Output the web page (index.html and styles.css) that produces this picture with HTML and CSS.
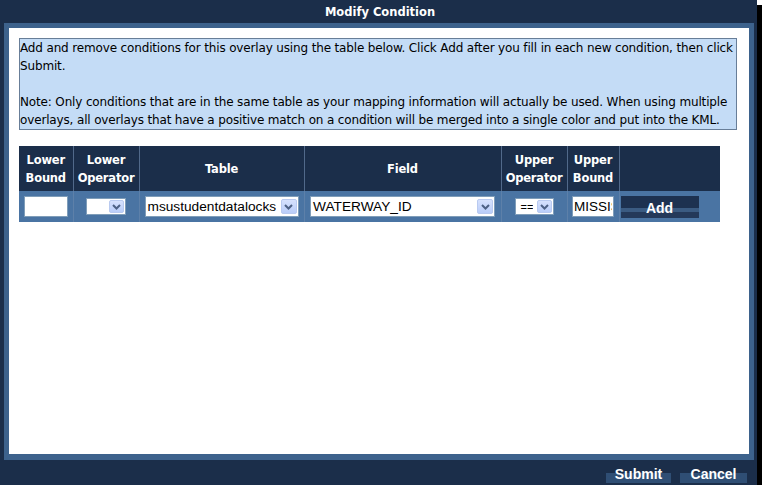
FILE: index.html
```html
<!DOCTYPE html>
<html>
<head>
<meta charset="utf-8">
<title>Modify Condition</title>
<link rel="stylesheet" href="styles.css">
</head>
<body>
<div class="window">
  <div class="titlebar">Modify Condition</div>
  <div class="frame">
    <div class="content">
      <div class="info">Add and remove conditions for this overlay using the table below. Click Add after you fill in each new condition, then click<br>Submit.<br><br>Note: Only conditions that are in the same table as your mapping information will actually be used. When using multiple<br>overlays, all overlays that have a positive match on a condition will be merged into a single color and put into the KML.</div>
      <table class="conditions">
        <colgroup>
          <col class="c1"><col class="c2"><col class="c3"><col class="c4"><col class="c5"><col class="c6"><col class="c7">
        </colgroup>
        <thead>
          <tr>
            <th>Lower<br>Bound</th>
            <th>Lower<br>Operator</th>
            <th>Table</th>
            <th>Field</th>
            <th>Upper<br>Operator</th>
            <th>Upper<br>Bound</th>
            <th></th>
          </tr>
        </thead>
        <tbody>
          <tr>
            <td><input class="textbox lower" type="text" value=""></td>
            <td><span class="select small op-lower"><span class="sel-text"></span><span class="arrow"><svg width="9" height="6" viewBox="0 0 9 6"><path d="M1 1 L4.5 4.5 L8 1" fill="none" stroke="#4d6185" stroke-width="2"/></svg></span></span></td>
            <td><span class="select big tablesel"><span class="sel-text">msustudentdatalocks</span><span class="arrow"><svg width="9" height="6" viewBox="0 0 9 6"><path d="M1 1 L4.5 4.5 L8 1" fill="none" stroke="#4d6185" stroke-width="2"/></svg></span></span></td>
            <td><span class="select big fieldsel"><span class="sel-text">WATERWAY_ID</span><span class="arrow"><svg width="9" height="6" viewBox="0 0 9 6"><path d="M1 1 L4.5 4.5 L8 1" fill="none" stroke="#4d6185" stroke-width="2"/></svg></span></span></td>
            <td><span class="select small op-upper"><span class="sel-text">==</span><span class="arrow"><svg width="9" height="6" viewBox="0 0 9 6"><path d="M1 1 L4.5 4.5 L8 1" fill="none" stroke="#4d6185" stroke-width="2"/></svg></span></span></td>
            <td><input class="textbox upper" type="text" value="MISSISSIPPI" readonly></td>
            <td class="addcell"><span class="btn add">Add</span></td>
          </tr>
        </tbody>
      </table>
    </div>
  </div>
  <div class="footer">
    <span class="btn foot">Submit</span>
    <span class="btn foot cancel">Cancel</span>
  </div>
</div>
</body>
</html>
```
FILE: styles.css
```css
* { box-sizing: border-box; }
html, body { margin: 0; padding: 0; background: #fff; }
body { font-family: "DejaVu Sans", Verdana, sans-serif; }

.window {
  width: 757px;
  height: 485px;
  background: #1b2e4a;
  box-shadow: 5px 5px 0 #000;
  display: flex;
  flex-direction: column;
}

.titlebar {
  height: 23px;
  color: #fff;
  font-weight: bold;
  font-size: 11.5px;
  display: flex;
  align-items: center;
  justify-content: center;
  padding-left: 3px;
}

.frame {
  margin: 0 3px 0 4px;
  background: #3d628c;
  padding: 5px 5px 6px 5px;
  height: 437px;
}

.content {
  background: #fff;
  height: 426px;
  padding: 10px 10px;
}

.info {
  width: 718px;
  border: 1px solid #687e98;
  background: #c4dcf6;
  font-size: 12px;
  letter-spacing: -0.15px;
  line-height: 18px;
  color: #000;
  white-space: nowrap;
  overflow: hidden;
}

.conditions {
  margin-top: 16px;
  border-collapse: collapse;
  table-layout: fixed;
  width: 701px;
}
.c1 { width: 54px; }
.c2 { width: 66px; }
.c3 { width: 165px; }
.c4 { width: 197px; }
.c5 { width: 66px; }
.c6 { width: 52px; }
.c7 { width: 101px; }

.conditions th {
  background: #1b2e4a;
  color: #fff;
  font-weight: bold;
  font-size: 11.5px;
  letter-spacing: -0.2px;
  line-height: 18px;
  height: 45px;
  padding: 0;
  border-left: 1px solid #51698a;
  text-align: center;
  vertical-align: middle;
}
.conditions th:first-child { border-left: none; }

.conditions td {
  background: #4a74a3;
  height: 31px;
  padding: 0;
  text-align: center;
  vertical-align: middle;
  border-left: 1px solid #5d80a9;
  font-size: 0;
}
.conditions td:first-child { border-left: none; }
.conditions td.addcell { text-align: left; padding-left: 1px; }

.textbox {
  display: inline-block;
  vertical-align: middle;
  height: 21px;
  margin: 0;
  padding: 0 1px;
  background: #fff;
  border: 1px solid #7f9db9;
  border-radius: 0;
  outline: none;
  font-family: "Liberation Sans", Arial, sans-serif;
  font-size: 13.5px;
  color: #000;
}
.textbox.lower { width: 44px; }
.textbox.upper { width: 42px; }

.select {
  display: inline-flex;
  vertical-align: middle;
  align-items: center;
  justify-content: space-between;
  background: #fff;
  border: 1px solid #7f9db9;
  font-family: "Liberation Sans", Arial, sans-serif;
  color: #000;
  text-align: left;
  overflow: hidden;
}
.select.big { height: 21px; font-size: 13.7px; }
.select.small { height: 17px; font-size: 11px; }
.op-lower { width: 40px; }
.op-upper { width: 39px; }
.tablesel { width: 154px; }
.fieldsel { width: 185px; }

.sel-text {
  padding-left: 2px;
  white-space: nowrap;
  overflow: hidden;
}
.small .sel-text { padding-left: 5px; }

.arrow {
  flex: none;
  width: 16px;
  height: 15px;
  margin-right: 1px;
  border: 1px solid #b9caf0;
  border-radius: 2px;
  background: linear-gradient(#d6e1fd, #b9cdf9);
  display: flex;
  align-items: center;
  justify-content: center;
}
.small .arrow { height: 13px; width: 15px; }

.btn {
  display: inline-flex;
  align-items: center;
  justify-content: center;
  font-family: "Liberation Sans", Arial, sans-serif;
  font-weight: bold;
  font-size: 14px;
  color: #fff;
}
.btn.add {
  width: 78px;
  height: 22px;
  background: linear-gradient(#1d3150 0, #1d3150 55%, #3b5b82 55%, #3b5b82 72%, #24395a 72%);
  padding-top: 2px;
}

.footer {
  height: 25px;
  display: flex;
  justify-content: flex-end;
  align-items: flex-start;
  gap: 9px;
  padding: 4px 10px 0 0;
}
.btn.foot {
  width: 65px;
  height: 19px;
  background: linear-gradient(#1b2e4a 0, #1b2e4a 47%, #2f4e74 47%);
}
.btn.foot.cancel { width: 67px; }
```
